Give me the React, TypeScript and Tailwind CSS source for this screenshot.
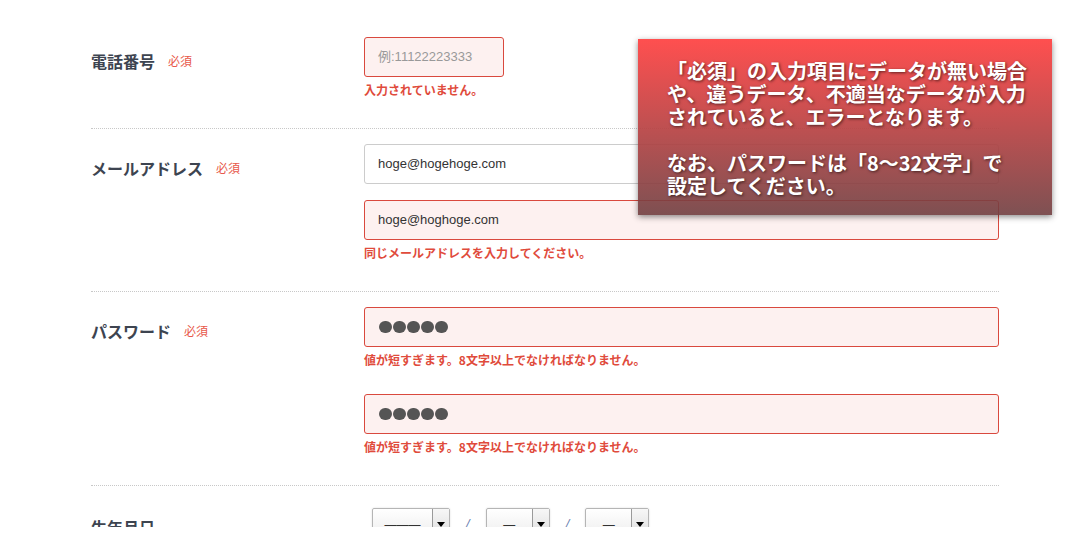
const jp = { fontFamily: '"Noto Sans CJK JP", "Noto Sans", sans-serif' };
const latin = { fontFamily: '"Liberation Sans", "Noto Sans CJK JP", sans-serif' };

function Label({ text }: { text: string }) {
  return (
    <div className="w-[273px] shrink-0 self-start pt-[12px] flex items-center" style={jp}>
      <span className="text-[16px] leading-[24px] font-bold text-[#3d4450]">{text}</span>
      <span className="ml-[13px] text-[12px] text-[#e8584a]">必須</span>
    </div>
  );
}

function Field({
  value,
  error,
  placeholder,
  dots,
  className = '',
}: {
  value?: string;
  error?: boolean;
  placeholder?: boolean;
  dots?: boolean;
  className?: string;
}) {
  return (
    <div
      className={`h-[40px] flex items-center px-[13px] rounded-[3px] border ${
        error ? 'border-[#d9493e] bg-[#fdf1f0]' : 'border-[#cccccc] bg-white'
      } ${className}`}
    >
      {dots ? (
        <div className="flex gap-[1.5px] pl-[1px]">
          {[0, 1, 2, 3, 4].map((i) => (
            <span key={i} className="block w-[12.5px] h-[12.5px] rounded-full bg-[#555555]" />
          ))}
        </div>
      ) : (
        <span className={`text-[13px] ${placeholder ? 'text-[#999999]' : 'text-[#333333]'}`} style={latin}>
          {value}
        </span>
      )}
    </div>
  );
}

function ErrorText({ text }: { text: string }) {
  return (
    <p className="mt-[5px] text-[12px] leading-[16px] font-bold text-[#e04b3c]" style={jp}>
      {text}
    </p>
  );
}

function SelectBox({ width, dash }: { width: string; dash: string }) {
  return (
    <div
      className={`${width} h-[32px] flex border border-[#b5b5b5] rounded-[2px] bg-[linear-gradient(to_bottom,#ffffff,#ececec)] shadow-[0_0_2px_rgba(0,0,0,0.15)]`}
    >
      <div className="flex-1 flex items-center justify-center pt-[2px]">
        <span className="text-[12px] text-[#333]" style={latin}>{dash}</span>
      </div>
      <div className="w-[17px] border-l border-[#9a9a9a] bg-[linear-gradient(to_bottom,#f7f7f7,#dcdcdc)] flex items-start justify-center pt-[13px]">
        <span className="block w-0 h-0 border-l-[4px] border-r-[4px] border-t-[5px] border-l-transparent border-r-transparent border-t-black" />
      </div>
    </div>
  );
}

export default function App() {
  return (
    <div className="relative w-[1090px] h-[550px] bg-white overflow-hidden">
      <div className="h-[527px] overflow-hidden">
        <div className="ml-[91px] w-[908px] pt-[21px]">
          <div className="flex pt-4 pb-[30px] border-b border-dotted border-[#c8c8c8]">
            <Label text="電話番号" />
            <div className="flex-1">
              <Field value="例:11122223333" placeholder error className="w-[140px]" />
              <ErrorText text="入力されていません。" />
            </div>
          </div>

          <div className="flex pt-[15px] pb-[30px] border-b border-dotted border-[#c8c8c8]">
            <Label text="メールアドレス" />
            <div className="flex-1">
              <Field value="hoge@hogehoge.com" />
              <Field value="hoge@hoghoge.com" error className="mt-[16px]" />
              <ErrorText text="同じメールアドレスを入力してください。" />
            </div>
          </div>

          <div className="flex pt-[15px] pb-[30px] border-b border-dotted border-[#c8c8c8]">
            <Label text="パスワード" />
            <div className="flex-1">
              <Field dots error />
              <ErrorText text="値が短すぎます。8文字以上でなければなりません。" />
              <Field dots error className="mt-[26px]" />
              <ErrorText text="値が短すぎます。8文字以上でなければなりません。" />
            </div>
          </div>

          <div className="flex pt-[15px]">
            <div className="w-[273px] shrink-0 pt-[14px]" style={jp}>
              <span className="text-[16px] leading-[24px] font-bold text-[#3d4450]">生年月日</span>
            </div>
            <div className="flex-1 flex items-start pt-[7px] pl-[8px]" style={latin}>
              <SelectBox width="w-[78px]" dash="———" />
              <span className="mx-[16px] mt-[6px] text-[13px] italic text-[#6a7fb0]">/</span>
              <SelectBox width="w-[64px]" dash="—" />
              <span className="mx-[16px] mt-[6px] text-[13px] italic text-[#6a7fb0]">/</span>
              <SelectBox width="w-[64px]" dash="—" />
            </div>
          </div>
        </div>
      </div>

      <div
        className="absolute left-[638px] top-[39px] w-[414px] h-[176px] pl-[29px] pt-[20px] bg-[linear-gradient(to_bottom,rgba(255,72,72,0.96),rgba(112,62,64,0.9))] shadow-[0_2px_6px_rgba(0,0,0,0.45)]"
        style={jp}
      >
        <p className="text-[20px] leading-[23px] font-bold text-white [text-shadow:1px_1px_3px_rgba(0,0,0,0.6)] whitespace-nowrap">
          「必須」の入力項目にデータが無い場合
          <br />
          や、違うデータ、不適当なデータが入力
          <br />
          されていると、エラーとなります。
          <br />
          <br />
          なお、パスワードは「8～32文字」で
          <br />
          設定してください。
        </p>
      </div>
    </div>
  );
}
